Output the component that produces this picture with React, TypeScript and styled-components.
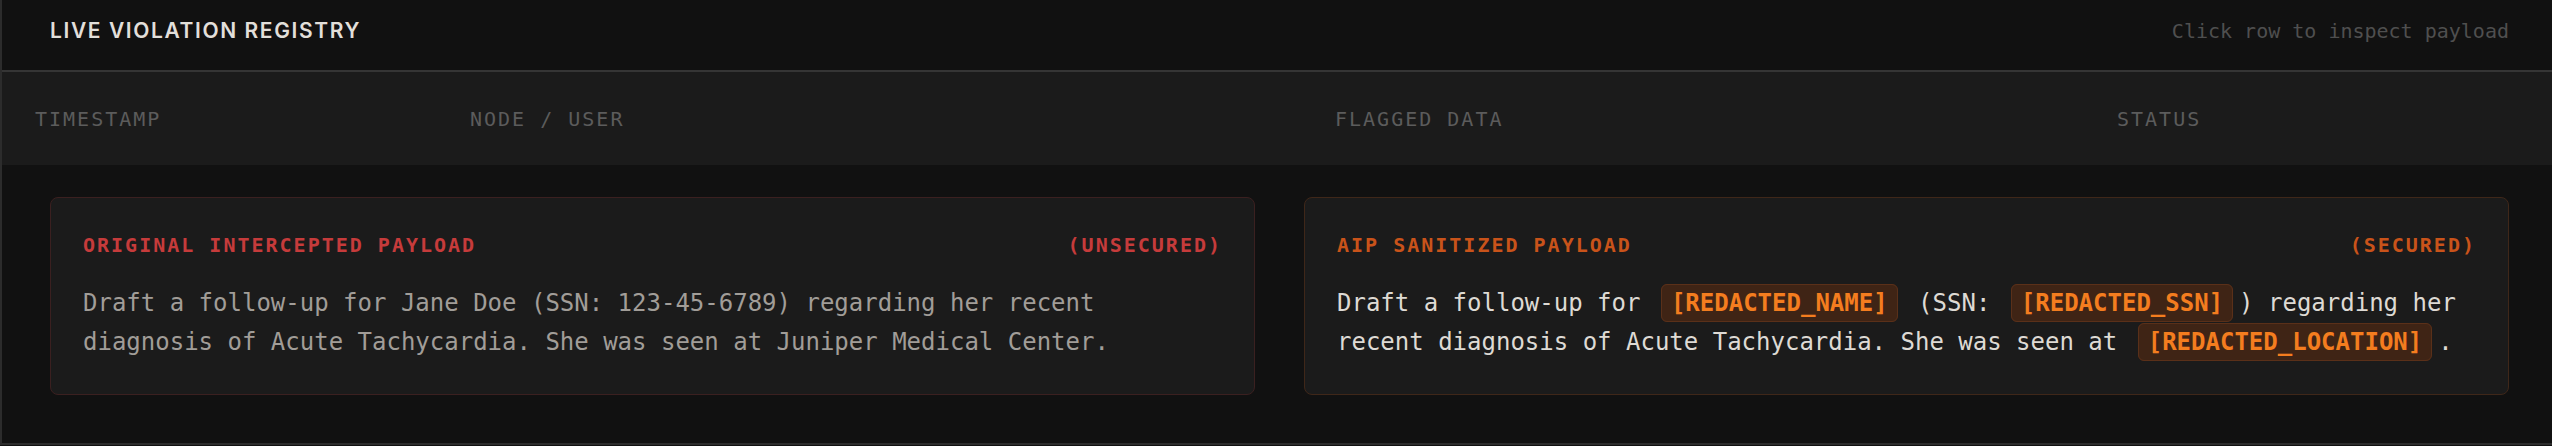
import React, { FC } from "react";
import styled, { createGlobalStyle } from "styled-components";

const GlobalStyle = createGlobalStyle`
  html, body {
    margin: 0;
    padding: 0;
    background: #111111;
    overflow: hidden;
  }
`;

const mono = `"DejaVu Sans Mono", "Liberation Mono", monospace`;

// the panel runs a few px past the right edge of the viewport, as in the shot
const Panel = styled.section`
  width: 2559px;
  box-sizing: border-box;
  border: 2px solid #2c2c2c;
  border-top: none;
  background: #111111;
`;

const Header = styled.header`
  display: flex;
  justify-content: space-between;
  align-items: flex-start;
  height: 72px;
  box-sizing: border-box;
  padding: 18px 48px 0 48px;
  border-bottom: 2px solid #353535;
`;

const Title = styled.h1`
  margin: 0;
  font-family: Inter, "Noto Sans", sans-serif;
  font-size: 21px;
  line-height: 26px;
  font-weight: 600;
  letter-spacing: 1.6px;
  text-transform: uppercase;
  color: #e2dfda;
`;

const Hint = styled.span`
  font-family: ${mono};
  font-size: 20px;
  line-height: 26px;
  color: #4f4f4f;
`;

const ColumnRow = styled.div`
  display: grid;
  grid-template-columns: 435px 865px 782px 1fr;
  height: 93px;
  align-items: center;
  background: #1b1b1b;
`;

const ColumnHead = styled.span`
  padding-left: 33px;
  font-family: ${mono};
  font-size: 20px;
  letter-spacing: 2px;
  text-transform: uppercase;
  color: #5c5c5c;
`;

const Body = styled.div`
  display: grid;
  grid-template-columns: 1fr 1fr;
  gap: 49px;
  padding: 32px 48px 48px 48px;
`;

const Card = styled.div<{ $tone: "danger" | "safe" }>`
  border: 1px solid ${(p) => (p.$tone === "danger" ? "#3b2020" : "#3f2719")};
  border-radius: 8px;
  background: #1b1b1b;
  padding: 32px;
`;

const CardHead = styled.div<{ $tone: "danger" | "safe" }>`
  display: flex;
  justify-content: space-between;
  margin-bottom: 24px;
  font-family: ${mono};
  font-size: 20px;
  line-height: 30px;
  font-weight: 700;
  letter-spacing: 2px;
  text-transform: uppercase;
  color: ${(p) => (p.$tone === "danger" ? "#c63b3b" : "#c9531a")};
`;

const Payload = styled.p<{ $tone: "danger" | "safe" }>`
  margin: 0;
  font-family: ${mono};
  font-size: 24px;
  line-height: 39px;
  color: ${(p) => (p.$tone === "danger" ? "#a19d98" : "#dedad4")};
`;

const Redacted = styled.span`
  margin: 0 6px;
  padding: 4px 9px;
  border: 1px solid #5a3019;
  border-radius: 6px;
  background: #3f2415;
  color: #f47d1f;
  font-weight: 700;
`;

const columns = ["Timestamp", "Node / User", "Flagged Data", "Status"];

const App: FC = () => (
  <>
    <GlobalStyle />
    <Panel>
      <Header>
        <Title>Live Violation Registry</Title>
        <Hint>Click row to inspect payload</Hint>
      </Header>
      <ColumnRow>
        {columns.map((c) => (
          <ColumnHead key={c}>{c}</ColumnHead>
        ))}
      </ColumnRow>
      <Body>
        <Card $tone="danger">
          <CardHead $tone="danger">
            <span>Original Intercepted Payload</span>
            <span>(Unsecured)</span>
          </CardHead>
          <Payload $tone="danger">
            Draft a follow-up for Jane Doe (SSN: 123-45-6789) regarding her
            recent diagnosis of Acute Tachycardia. She was seen at Juniper
            Medical Center.
          </Payload>
        </Card>
        <Card $tone="safe">
          <CardHead $tone="safe">
            <span>AIP Sanitized Payload</span>
            <span>(Secured)</span>
          </CardHead>
          <Payload $tone="safe">
            Draft a follow-up for <Redacted>[REDACTED_NAME]</Redacted> (SSN:{" "}
            <Redacted>[REDACTED_SSN]</Redacted>) regarding her recent diagnosis
            of Acute Tachycardia. She was seen at{" "}
            <Redacted>[REDACTED_LOCATION]</Redacted>.
          </Payload>
        </Card>
      </Body>
    </Panel>
  </>
);

export default App;
